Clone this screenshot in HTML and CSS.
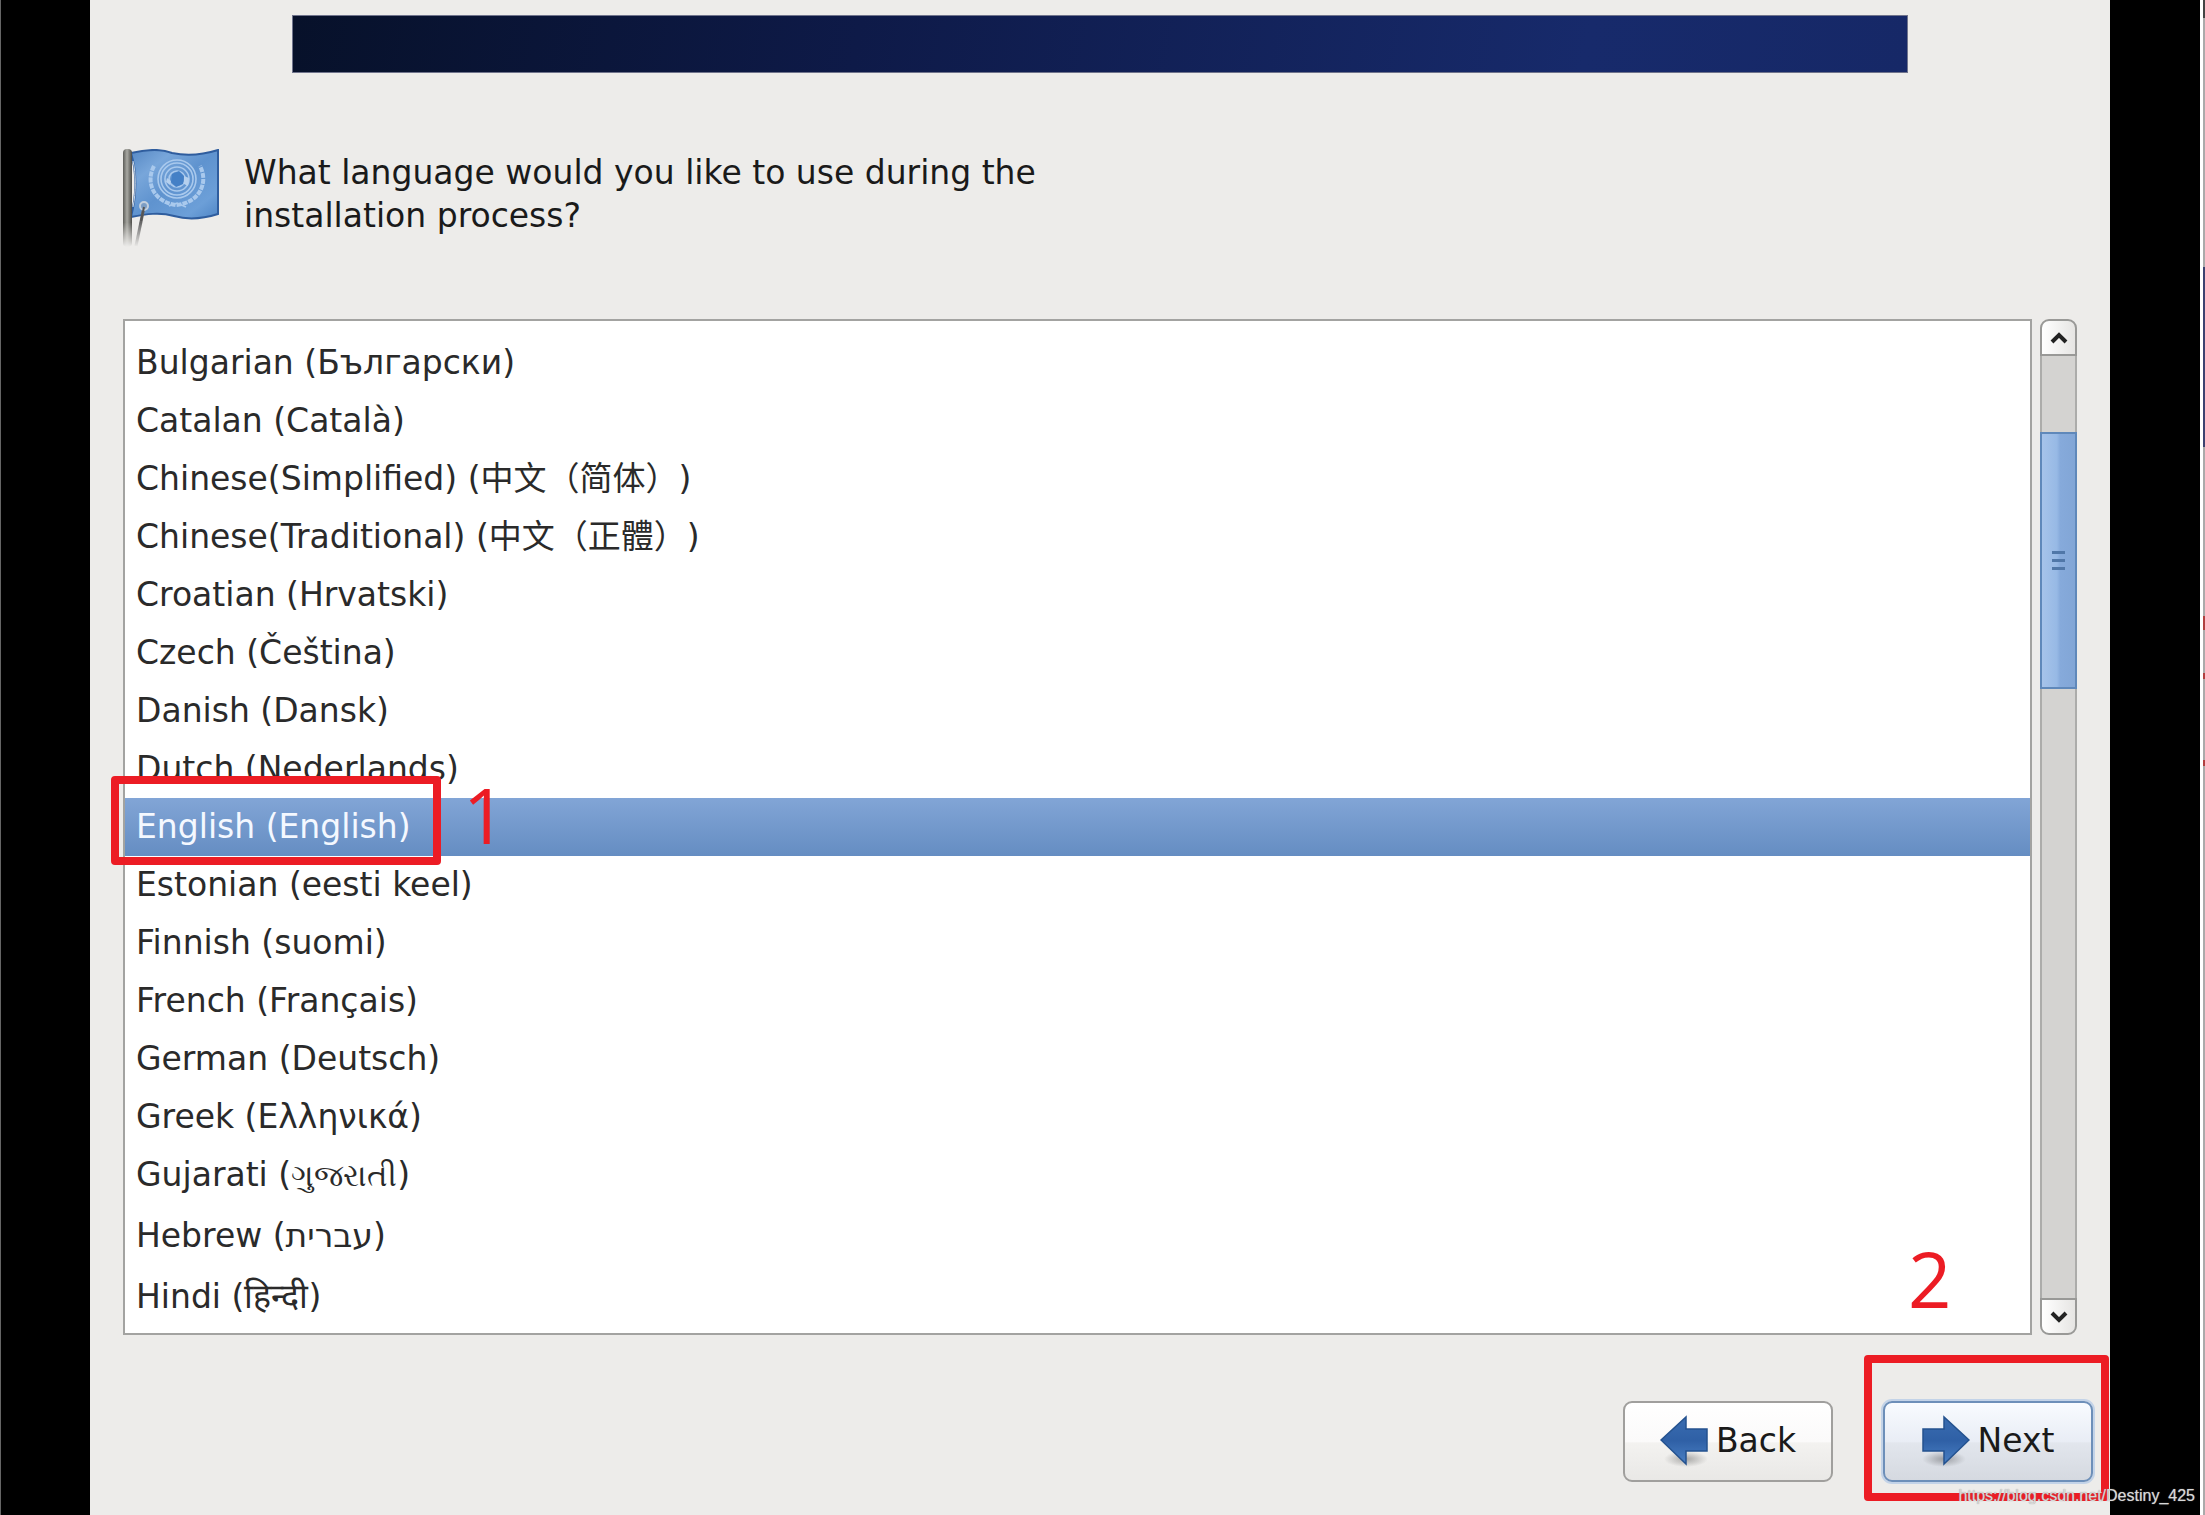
FILE: index.html
```
<!DOCTYPE html>
<html lang="en">
<head>
    <meta charset="UTF-8">
    <meta name="viewport" content="width=device-width, initial-scale=1.0">
    <title>Language selection</title>
    <link rel="stylesheet" href="styles.css">
</head>
<body>
    <form class="installer">
        <div class="banner"></div>

        <!-- Question -->
        <header class="question">
            <svg class="flag" viewBox="0 0 97 98" aria-hidden="true">
                <defs>
                    <linearGradient id="pole" x1="0" x2="1" y1="0" y2="0">
                        <stop offset="0" stop-color="#5c5c58"/>
                        <stop offset=".45" stop-color="#a9a9a3"/>
                        <stop offset="1" stop-color="#4c4c48"/>
                    </linearGradient>
                    <linearGradient id="fade" x1="0" x2="0" y1="0" y2="1">
                        <stop offset=".75" stop-color="#fff"/>
                        <stop offset="1" stop-color="#000"/>
                    </linearGradient>
                    <linearGradient id="cloth" x1="0" x2="1" y1="0" y2="1">
                        <stop offset="0" stop-color="#5688c4"/>
                        <stop offset=".25" stop-color="#78a6da"/>
                        <stop offset=".5" stop-color="#5f93cf"/>
                        <stop offset=".8" stop-color="#6c9fd8"/>
                        <stop offset="1" stop-color="#4f86c6"/>
                    </linearGradient>
                    <mask id="poleMask"><rect width="97" height="98" fill="url(#fade)"/></mask>
                </defs>
                <path d="M9 4C22 1 38 -1 50 4C64 7 80 6 96 1V65C80 70 66 71 52 67C38 63 24 65 9 68C14 48 15 24 9 4Z" fill="url(#cloth)" stroke="#2f5d9e" stroke-width="2"/>
                <g fill="none" stroke="#a9c9ed" stroke-width="1.6">
                    <circle cx="55" cy="30" r="8"/>
                    <circle cx="55" cy="30" r="12"/>
                    <circle cx="55" cy="30" r="16"/>
                    <circle cx="55" cy="30" r="19"/>
                    <path d="M32 17C23 34 32 53 54 56C77 54 87 34 78 17" stroke-width="4" stroke-dasharray="5 1"/>
                    <path d="M47 57L55 54L64 58"/>
                </g>
                <path d="M49 33L50 25L57 22L62 27L61 35L54 38Z" fill="#4480c6"/>
                <path d="M45 29l4 3-1 4-4-3zM62 27l5 2-1 8-4-2z" fill="#b5d0ee"/>
                <g mask="url(#poleMask)">
                    <rect x="1" y="0" width="9" height="98" rx="4" fill="url(#pole)"/>
                    <path d="M11 12C14 24 14 44 11 58" fill="none" stroke="#c9d6e4" stroke-width="1"/>
                    <path d="M22 58L14 97" stroke="#666" stroke-width="3"/>
                </g>
                <circle cx="22" cy="57" r="4" fill="#7c9dc4" stroke="#c3cfdc" stroke-width="2"/>
                <path d="M22 58L19 72" stroke="#555" stroke-width="2"/>
            </svg>
            <h1>What language would you like to use during the installation process?</h1>
        </header>

        <!-- Languages -->
        <div class="picker">
            <ul class="languages">
                <li><label><input type="radio" name="lang">Bulgarian (Български)</label></li>
                <li><label><input type="radio" name="lang">Catalan (Català)</label></li>
                <li><label><input type="radio" name="lang">Chinese(Simplified) (<span class="cjk" lang="zh-CN">中文（简体）</span>)</label></li>
                <li><label><input type="radio" name="lang">Chinese(Traditional) (<span class="cjk" lang="zh-CN">中文（正體）</span>)</label></li>
                <li><label><input type="radio" name="lang">Croatian (Hrvatski)</label></li>
                <li><label><input type="radio" name="lang">Czech (Čeština)</label></li>
                <li><label><input type="radio" name="lang">Danish (Dansk)</label></li>
                <li><label><input type="radio" name="lang">Dutch (Nederlands)</label></li>
                <li class="selected">
                    <label><input type="radio" name="lang" checked>English (English)</label>
                    <span class="mark mark-language"></span>
                    <span class="step step-one">1</span>
                </li>
                <li><label><input type="radio" name="lang">Estonian (eesti keel)</label></li>
                <li><label><input type="radio" name="lang">Finnish (suomi)</label></li>
                <li><label><input type="radio" name="lang">French (Français)</label></li>
                <li><label><input type="radio" name="lang">German (Deutsch)</label></li>
                <li><label><input type="radio" name="lang">Greek (Ελληνικά)</label></li>
                <li class="tall"><label><input type="radio" name="lang">Gujarati (<span class="gujarati">ગુજરાતી</span>)</label></li>
                <li class="tall"><label><input type="radio" name="lang">Hebrew (<bdi>עברית</bdi>)</label></li>
                <li class="tall"><label><input type="radio" name="lang">Hindi (<span class="hindi">हिन्दी</span>)</label></li>
            </ul>
            <div class="scrollbar">
                <button type="button" class="arrow arrow-up" aria-label="Scroll up">
                    <svg viewBox="0 0 18 12"><path d="M2 10L9 3L16 10"/></svg>
                </button>
                <div class="track"><div class="thumb"><i></i><i></i><i></i></div></div>
                <button type="button" class="arrow arrow-down" aria-label="Scroll down">
                    <svg viewBox="0 0 18 12"><path d="M2 2L9 9L16 2"/></svg>
                </button>
            </div>
        </div>

        <!-- Navigation -->
        <footer class="actions">
            <button type="button" class="btn">
                <svg viewBox="0 0 48 52" aria-hidden="true">
                    <defs>
                        <linearGradient id="blue" x1="0" x2="0" y1="0" y2="1">
                            <stop offset="0" stop-color="#3a6cb0"/>
                            <stop offset=".5" stop-color="#2f60a6"/>
                            <stop offset="1" stop-color="#4a80c4"/>
                        </linearGradient>
                        <radialGradient id="shade">
                            <stop offset="0" stop-color="#000" stop-opacity=".3"/>
                            <stop offset="1" stop-color="#000" stop-opacity="0"/>
                        </radialGradient>
                    </defs>
                    <ellipse cx="26" cy="44" rx="22" ry="8" fill="url(#shade)"/>
                    <path d="M1 25L26 2V14H47V36H26V49Z" fill="url(#blue)" stroke="#24528f" stroke-width="1.5"/>
                </svg>
                Back
            </button>
            <div class="next">
                <button type="submit" class="btn btn-default">
                    <svg viewBox="0 0 48 52" aria-hidden="true">
                        <ellipse cx="22" cy="44" rx="22" ry="8" fill="url(#shade)"/>
                        <path d="M47 25L22 2V14H1V36H22V49Z" fill="url(#blue)" stroke="#24528f" stroke-width="1.5"/>
                    </svg>
                    Next
                </button>
                <span class="mark mark-next"></span>
                <span class="step step-two">2</span>
            </div>
        </footer>
    </form>
    <div class="edge"></div>
    <p class="watermark">https://blog.csdn.net/Destiny_425</p>
</body>
</html>
```
FILE: styles.css
```
* {
    margin: 0;
    padding: 0;
    box-sizing: border-box;
}
body {
    display: flex;
    position: relative;
    min-height: 100vh;
    padding-left: 89px;
    border-left: 1px solid #666;
    background: #000;
    color: #2a2a2a;
    font-family: "DejaVu Sans", sans-serif;
    font-size: 33px;
}
.installer {
    flex: 1;
    display: flex;
    flex-direction: column;
    margin-right: 90px;
    padding: 15px 33px 33px;
    background: #edecea;
}
.banner {
    height: 58px;
    margin: 0 169px;
    border: 1px solid #70748c;
    background: linear-gradient(100deg, #07112a, #0e1a48 35%, #172a6b 80%, #162867);
}
.question {
    display: flex;
    align-items: flex-start;
    gap: 25px;
    height: 246px;
    padding-top: 76px;
}
.flag {
    width: 97px;
    height: 98px;
    margin-left: -1px;
}
.question h1 {
    width: 830px;
    padding-top: 2px;
    color: #1a1a1a;
    font-size: 33px;
    font-weight: normal;
    line-height: 43px;
}

/* language list */
.picker {
    display: flex;
    gap: 8px;
}
.languages {
    flex: 1;
    list-style: none;
    padding: 13px 0 4px;
    border: 2px solid #a3a3a1;
    background: #fff;
}
.languages li {
    position: relative;
    height: 58px;
    padding-left: 11px;
    line-height: 57px;
    white-space: nowrap;
}
.languages .tall {
    height: 61px;
}
.languages label {
    display: block;
}
.languages input {
    position: absolute;
    appearance: none;
}
.languages .selected {
    background: linear-gradient(#82a5d6, #658dc2);
}
.selected label {
    color: #f4f8ff;
}
.cjk {
    font-family: "Noto Sans CJK SC", sans-serif;
    line-height: 1;
    text-spacing-trim: space-all;
}
.gujarati {
    font-size: 31px;
    line-height: 1;
}
.hindi {
    font-size: 34px;
    line-height: 1;
}

/* scrollbar */
.scrollbar {
    display: flex;
    flex-direction: column;
    width: 37px;
}
.arrow {
    display: flex;
    align-items: center;
    justify-content: center;
    height: 37px;
    border: 2px solid #999997;
    background: linear-gradient(90deg, #fff, #e6e5e3);
}
.arrow-up {
    border-radius: 9px 9px 0 0;
}
.arrow-down {
    border-radius: 0 0 9px 9px;
}
.arrow svg {
    width: 18px;
    height: 12px;
    fill: none;
    stroke: #222;
    stroke-width: 4;
}
.track {
    flex: 1;
    padding-top: 76px;
    border: solid #acacaa;
    border-width: 0 2px;
    background: #d4d3d1;
}
.thumb {
    display: flex;
    flex-direction: column;
    align-items: center;
    justify-content: center;
    gap: 5px;
    height: 257px;
    margin: 0 -2px;
    border: 2px solid #5f88ba;
    background: linear-gradient(90deg, #a6c3ea, #97b9e5 45%, #86aadb 55%, #82a6d6);
}
.thumb i {
    width: 13px;
    height: 3px;
    background: #5077a8;
}

/* buttons */
.actions {
    display: flex;
    justify-content: flex-end;
    gap: 50px;
    margin: 66px -16px 0 0;
}
.btn {
    display: flex;
    align-items: center;
    justify-content: center;
    gap: 8px;
    width: 210px;
    height: 81px;
    padding-bottom: 2px;
    border: 2px solid #a09f9d;
    border-radius: 9px;
    background: linear-gradient(#fff, #fbfafa 50%, #f3f2f0 52%, #e9e8e6);
    color: #1a1a1a;
    font: inherit;
}
.btn svg {
    width: 48px;
    height: 52px;
}
.btn-default {
    border-color: #6d8fb9;
    background: linear-gradient(#f8fbff, #e9edf5 50%, #e2e6ed 52%, #d5d9e0);
    box-shadow: 0 0 0 2px #c3d3e8;
}
.next {
    position: relative;
}

/* red step marks */
.mark {
    position: absolute;
    border: 8px solid #ec1c24;
    border-radius: 4px;
    pointer-events: none;
}
.mark-language {
    z-index: 1;
    top: -22px;
    left: -14px;
    width: 330px;
    height: 89px;
}
.mark-next {
    top: -46px;
    left: -19px;
    width: 245px;
    height: 146px;
}
.step {
    position: absolute;
    color: #ec1c24;
    font-family: "Open Sans", sans-serif;
    font-size: 76px;
    line-height: 76px;
}
.step-one {
    top: -21px;
    left: 338px;
}
.step-two {
    top: -160px;
    left: 25px;
}

.edge {
    width: 5px;
    border-left: 3px solid #fff;
    background: linear-gradient(#444 18px, #aaa 18px 267px, #3c4270 267px 447px, #aaa 447px 616px, #b04040 616px 630px, #aaa 630px 673px, #b04040 673px 679px, #aaa 679px 760px, #b04040 760px 766px, #aaa 766px);
}
.watermark {
    position: absolute;
    right: 10px;
    bottom: 10px;
    color: #d8d8d8;
    font-family: "Liberation Sans", sans-serif;
    font-size: 16px;
    line-height: 18px;
    text-shadow: 0 0 1px #999;
}
```
